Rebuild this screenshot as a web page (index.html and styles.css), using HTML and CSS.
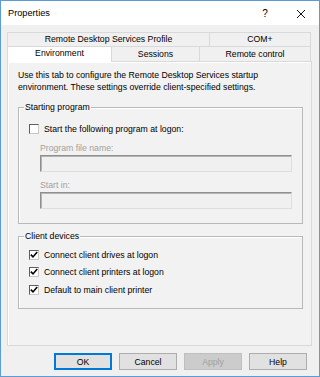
FILE: index.html
```html
<!DOCTYPE html>
<html lang="en">

<head>
    <meta charset="UTF-8">
    <meta name="viewport" content="width=device-width, initial-scale=1.0">
    <title>Properties</title>
    <link rel="stylesheet" href="styles.css">
</head>

<body>

    <div class="window">
        <div class="titlebar">
            <span class="title">Properties</span>
            <span class="caption-btn help-btn">?</span>
            <span class="caption-btn close-btn">
                <svg width="10" height="10" viewBox="0 0 10 10">
                    <path d="M1 1 L9 9 M9 1 L1 9" stroke="#111" stroke-width="1" fill="none"/>
                </svg>
            </span>
        </div>

        <div class="dialog">
            <div class="tabs">
                <div class="tab-row">
                    <div class="tab tab-profile">Remote Desktop Services Profile</div>
                    <div class="tab tab-com">COM+</div>
                </div>
                <div class="tab-row">
                    <div class="tab tab-env active">Environment</div>
                    <div class="tab tab-sessions">Sessions</div>
                    <div class="tab tab-remote">Remote control</div>
                </div>
            </div>

            <div class="panel">
                <p class="intro">Use this tab to configure the Remote Desktop Services startup<br>environment. These settings override client-specified settings.</p>

                <fieldset class="group group-start">
                    <legend>Starting program</legend>
                    <div class="check-row">
                        <span class="checkbox"></span>
                        <span>Start the following program at logon:</span>
                    </div>
                    <div class="field">
                        <span class="field-label">Program file name:</span>
                        <span class="textbox"></span>
                    </div>
                    <div class="field">
                        <span class="field-label">Start in:</span>
                        <span class="textbox"></span>
                    </div>
                </fieldset>

                <fieldset class="group group-devices">
                    <legend>Client devices</legend>
                    <div class="check-row">
                        <span class="checkbox checked"></span>
                        <span>Connect client drives at logon</span>
                    </div>
                    <div class="check-row">
                        <span class="checkbox checked"></span>
                        <span>Connect client printers at logon</span>
                    </div>
                    <div class="check-row">
                        <span class="checkbox checked"></span>
                        <span>Default to main client printer</span>
                    </div>
                </fieldset>
            </div>

            <div class="buttons">
                <span class="btn btn-default">OK</span>
                <span class="btn">Cancel</span>
                <span class="btn btn-disabled">Apply</span>
                <span class="btn">Help</span>
            </div>
        </div>
    </div>

</body>

</html>
```

FILE: styles.css
```css
body {
    margin: 0;
    font-family: "Liberation Sans", Arial, sans-serif;
    font-size: 8.7px;
    color: #000;
}

.window {
    width: 320px;
    height: 377px;
    box-sizing: border-box;
    border: 1px solid #5a9bd8;
    display: flex;
    flex-direction: column;
    background: #f0f0f0;
}

.titlebar {
    height: 24px;
    flex: 0 0 auto;
    display: flex;
    align-items: center;
    background: #fff;
}

.titlebar .title {
    flex: 1;
    padding-left: 7px;
    font-size: 9.2px;
}

.caption-btn {
    width: 36px;
    height: 24px;
    display: flex;
    align-items: center;
    justify-content: center;
}

.help-btn {
    font-size: 10px;
}

.close-btn svg {
    margin-top: 1px;
}

.dialog {
    flex: 1;
    display: flex;
    flex-direction: column;
    padding: 7px 7px 6px 6px;
}

.tab-row {
    display: flex;
    height: 14px;
    margin-right: 1px;
}

.tab-row + .tab-row {
    height: 15px;
}

.tab {
    box-sizing: border-box;
    border: 1px solid #d9d9d9;
    border-bottom: none;
    border-right: none;
    display: flex;
    align-items: center;
    justify-content: center;
    background: #f0f0f0;
    line-height: 1;
}

.tab:last-child {
    border-right: 1px solid #d9d9d9;
}

.tab-profile { width: 202px; }
.tab-com { flex: 1; }
.tab-env { width: 104px; }
.tab-sessions { width: 88px; }
.tab-remote { flex: 1; }

.tab.active {
    background: #fff;
    padding-bottom: 2px;
    margin-bottom: -1px;
    position: relative;
    z-index: 1;
}

.panel {
    flex: 1;
    border: 1px solid #d9d9d9;
    box-shadow: inset 1px 1px 0 #fff;
    background: #f2f2f2;
    padding: 7px 8px 0 10px;
}

.intro {
    margin: 0;
    line-height: 12px;
}

.group {
    margin: 8px 0 0 0;
    padding: 0 10px 0 10px;
    border: 1px solid #b9b9b9;
    box-shadow: inset 1px 1px 0 #fff;
}

.group legend {
    padding: 0 1px;
    margin-left: -5px;
    line-height: 12px;
    background: #f2f2f2;
}

.group-start {
    padding-top: 10px;
    padding-bottom: 14px;
}

.group-devices {
    margin-top: 6px;
    padding-top: 4px;
    padding-bottom: 9px;
}

.check-row {
    display: flex;
    align-items: center;
    gap: 5px;
    height: 12px;
}

.group-devices .check-row {
    height: 17.5px;
}

.checkbox {
    width: 10px;
    height: 10px;
    box-sizing: border-box;
    border: 1px solid #5e5e5e;
    border-right-color: #c8c8c8;
    border-bottom-color: #c8c8c8;
    background: #fff;
    flex: 0 0 auto;
}

.checkbox.checked {
    background: #fff url("data:image/svg+xml;utf8,<svg xmlns='http://www.w3.org/2000/svg' width='8' height='8' viewBox='0 0 8 8'><path d='M0.8 3.6 L3 5.9 L7.2 1' stroke='%23000' stroke-width='1.6' fill='none'/></svg>") center / 8px 8px no-repeat;
}

.field {
    display: flex;
    flex-direction: column;
    margin: 7px 0 0 11px;
}

.field + .field {
    margin-top: 7px;
}

.field-label {
    color: #a0a0a0;
    line-height: 12px;
    margin-bottom: 1px;
}

.textbox {
    height: 17px;
    box-sizing: border-box;
    border: 1px solid #8f8f8f;
    border-right-color: #dedede;
    border-bottom-color: #dedede;
    box-shadow: inset 1px 1px 0 #b4b4b4;
    background: #f0f0f0;
}

.buttons {
    display: flex;
    justify-content: flex-end;
    gap: 7px;
    margin-top: 7px;
    padding-right: 5px;
}

.btn {
    width: 58px;
    height: 17px;
    box-sizing: border-box;
    border: 1px solid #adadad;
    background: #e1e1e1;
    display: flex;
    align-items: center;
    justify-content: center;
}

.btn-default {
    border-color: #0078d7;
    box-shadow: inset 0 0 0 1px #0078d7;
}

.btn-disabled {
    border-color: #bfbfbf;
    background: #cccccc;
    color: #a0a0a0;
}
```
